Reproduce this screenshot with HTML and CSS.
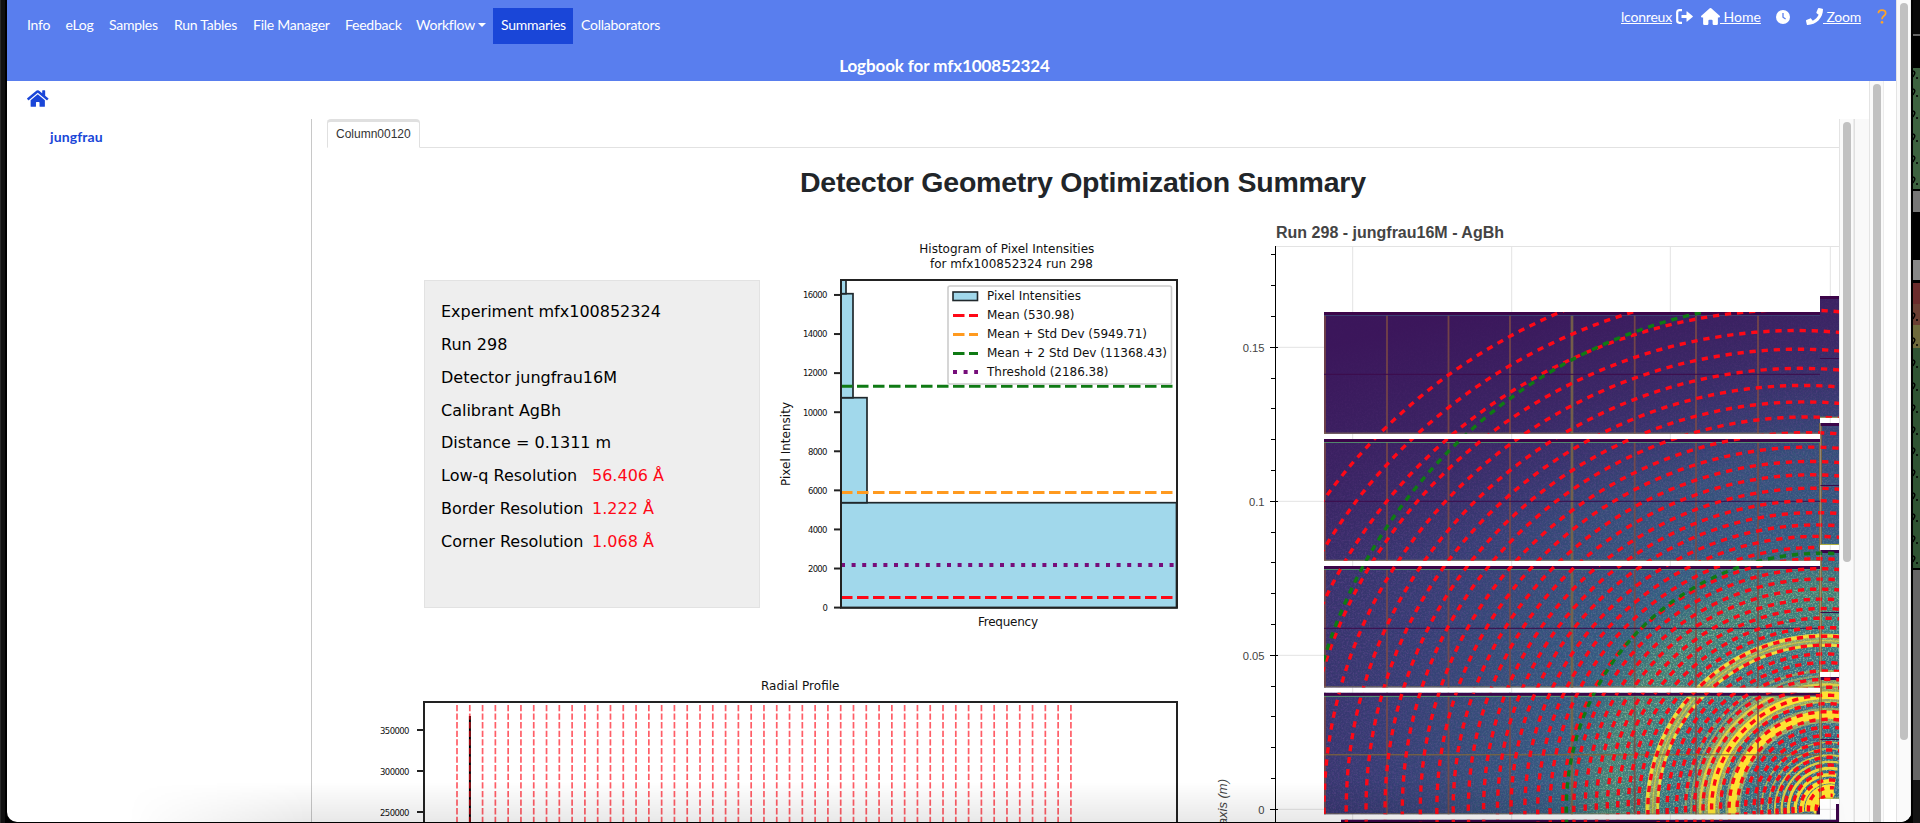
FILE: index.html
```html
<!DOCTYPE html>
<html lang="en">
<head>
<meta charset="utf-8">
<title>Logbook for mfx100852324</title>
<link rel="stylesheet" href="styles.css">
</head>
<body>
<div class="desktop">
  <div class="desktop-left"></div>
  <div class="window">
    <div class="page">
      <header class="header">
        <div class="bar">
          <nav class="nav">
            <a class="n1">Info</a><a class="n2">eLog</a><a class="n3">Samples</a><a class="n4">Run Tables</a><a class="n5">File Manager</a><a class="n6">Feedback</a><a class="n7">Workflow<i class="caret"></i></a><a class="n8 active">Summaries</a><a class="n9">Collaborators</a>
          </nav>
          <div class="tools">
            <u class="user">lconreux</u>
            <svg class="i-out" viewBox="0 0 17 15"><path d="M6 1.2H3.4Q1.2 1.2 1.2 3.4v8.200q0 2.200 2.200 2.200H6" fill="none" stroke="#fff" stroke-width="2.200"/><path d="M5.500 6h5V2.800q0-.8.7-.3l5.400 4.400q.6.6 0 1.200l-5.400 4.400q-.7.5-.7-.3V9h-5z" fill="#fff"/></svg>
            <svg class="i-home" viewBox="0 0 576 512"><path fill="#fff" d="M288 0q12 0 22 8L565 232q11 10 11 24 0 32-32 32h-32v184q0 40-40 40h-80q-40 0-40-40v-88q0-32-32-32h-64q-32 0-32 32v88q0 40-40 40h-80q-40 0-40-40V288H32Q0 288 0 256q0-14 10-24L266 8q10-8 22-8z"/></svg>
            <u class="home">&nbsp;Home</u>
            <svg class="i-clock" viewBox="0 0 14 14"><circle cx="7" cy="7" r="7" fill="#fff"/><path d="M7 3v4.200l2.600 1.800" fill="none" stroke="#597eee" stroke-width="1.300"/></svg>
            <svg class="i-phone" viewBox="0 0 512 512"><path fill="#fff" d="M493.400 24.600l-104-24c-11.300-2.600-22.900 3.300-27.500 13.900l-48 112c-4.200 9.800-1.400 21.300 6.900 28l60.600 49.600c-36 76.700-98.900 140.500-177.200 177.200l-49.600-60.600c-6.800-8.300-18.200-11.100-28-6.900l-112 48C3.900 366.500-2 378.100.6 389.400l24 104C27.100 504.200 36.700 512 48 512c256.100 0 464-207.500 464-464 0-11.200-7.700-20.900-18.600-23.400z"/></svg>
            <u class="zoom">&nbsp;Zoom</u>
            <svg class="i-help" viewBox="0 0 10 16"><path d="M1.200 4.600C1.200 2.400 2.800 1.200 5 1.200S8.900 2.500 8.900 4.500C8.900 7.300 5 7.300 5 10.800" fill="none" stroke="#ffa426" stroke-width="1.900"/><circle cx="5" cy="14.200" r="1.400" fill="#ffa426"/></svg>
          </div>
        </div>
        <h1>Logbook for mfx100852324</h1>
      </header>
      <div class="body">
        <div class="body-main">
          <div class="crumb"><svg class="i-house" viewBox="0 0 576 512"><path fill="#1a46d8" d="M280.370 148.260L96 300.110V464a16 16 0 0 0 16 16l112.060-.29a16 16 0 0 0 15.920-16V368a16 16 0 0 1 16-16h64a16 16 0 0 1 16 16v95.640a16 16 0 0 0 16 16.050L464 480a16 16 0 0 0 16-16V300L295.670 148.260a12.190 12.190 0 0 0-15.300 0zM571.600 251.470L488 182.560V44.050a12 12 0 0 0-12-12h-56a12 12 0 0 0-12 12v72.610L318.470 43a48 48 0 0 0-61 0L4.340 251.470a12 12 0 0 0-1.600 16.900l25.500 31A12 12 0 0 0 45.150 301l235.220-193.740a12.190 12.190 0 0 1 15.300 0L530.900 301a12 12 0 0 0 16.900-1.600l25.500-31a12 12 0 0 0-1.700-16.930z"/></svg></div>
          <div class="columns">
            <aside class="side"><a>jungfrau</a></aside>
            <main class="report">
              <div class="tabs"><div class="tab">Column00120</div></div>
              <h2>Detector Geometry Optimization Summary</h2>
              <div class="plots">
                <div class="left">
                  <div class="row">
                    <div class="info">
                      <p>Experiment mfx100852324</p><p>Run 298</p><p>Detector jungfrau16M</p><p>Calibrant AgBh</p><p>Distance = 0.1311 m</p>
                      <p><span>Low-q Resolution</span><b>56.406 Å</b></p><p><span>Border Resolution</span><b>1.222 Å</b></p><p><span>Corner Resolution</span><b>1.068 Å</b></p>
                    </div>
                    <svg class="hist" viewBox="765 235 425 405">
                      <g class="dj" font-size="12">
                        <text x="919.300" y="253" textLength="175">Histogram of Pixel Intensities</text>
                        <text x="930" y="268" textLength="163">for mfx100852324 run 298</text>
                        <text x="978" y="626" textLength="60">Frequency</text>
                        <text transform="translate(790 486) rotate(-90)" textLength="84">Pixel Intensity</text>
                      </g>
                      <g id="hist-ticks" class="dj" font-size="8.500"></g>
                      <g fill="#a1d8eb" stroke="#20282c" stroke-width="1.700">
                        <rect x="841" y="502.700" width="335.500" height="105"/>
                        <rect x="841" y="397.700" width="26" height="105"/>
                        <rect x="841" y="293.700" width="12" height="104"/>
                        <rect x="841" y="280" width="5" height="13.700"/>
                      </g>
                      <g stroke-width="3" stroke-dasharray="11.500 4.500">
                        <path d="M841 386.300H1176" stroke="#0f7a14"/><path d="M841 492.500H1176" stroke="#ff9a1f"/><path d="M841 597.500H1176" stroke="#ff0816"/>
                      </g>
                      <path d="M841 565H1176" stroke="#760d7a" stroke-width="3.800" stroke-dasharray="4 6.600"/>
                      <rect x="841" y="280" width="336" height="327.700" fill="none" stroke="#222" stroke-width="2"/>
                      <rect x="948" y="286" width="223.500" height="98" rx="2" fill="#fff" stroke="#ccc" stroke-width="1.600"/>
                      <rect x="953" y="292" width="24.500" height="8.500" fill="#a1d8eb" stroke="#20282c" stroke-width="1.600"/>
                      <g stroke-width="3" stroke-dasharray="11.500 4.500"><path d="M953 315.500h25" stroke="#ff0816"/><path d="M953 334.500h25" stroke="#ff9a1f"/><path d="M953 353.500h25" stroke="#0f7a14"/></g>
                      <path d="M953 372h25" stroke="#760d7a" stroke-width="3.800" stroke-dasharray="4 6.600"/>
                      <g class="dj" font-size="12">
                        <text x="987" y="300" textLength="94">Pixel Intensities</text><text x="987" y="319" textLength="87.500">Mean (530.98)</text><text x="987" y="338" textLength="160">Mean + Std Dev (5949.71)</text><text x="987" y="357" textLength="180">Mean + 2 Std Dev (11368.43)</text><text x="987" y="376" textLength="121.500">Threshold (2186.38)</text>
                      </g>
                    </svg>
                  </div>
                  <svg class="radial" viewBox="370 670 820 153">
                    <text class="dj" font-size="12" x="761" y="690" textLength="78.500">Radial Profile</text>
                    <g class="dj" font-size="8.500"><text x="380" y="733.500" textLength="29.500">350000</text><text x="380" y="774.500" textLength="29.500">300000</text><text x="380" y="815.500" textLength="29.500">250000</text></g>
                    <path d="M417 730h7M417 771h7M417 812h7" stroke="#222" stroke-width="2"/>
                    <path d="M469.900 716v107" stroke="#000" stroke-width="2"/>
                    <g id="radial-lines" stroke="#ff0816" stroke-opacity=".65" stroke-width="1.700" stroke-dasharray="6.300 2.300"></g>
                    <path d="M424 830V702H1177V830" fill="none" stroke="#222" stroke-width="2"/>
                  </svg>
                </div>
                <svg class="det" viewBox="1210 220 629 603">
                  <defs>
                    <radialGradient id="heat" gradientUnits="userSpaceOnUse" cx="1824" cy="809" r="640">
                      <stop offset="0" stop-color="#2f6a82"/><stop offset=".2" stop-color="#347681"/><stop offset=".28" stop-color="#35807c"/><stop offset=".34" stop-color="#408572"/><stop offset=".39" stop-color="#31697f"/><stop offset=".44" stop-color="#315980"/><stop offset=".56" stop-color="#344d79"/><stop offset=".68" stop-color="#363e75"/><stop offset=".8" stop-color="#37356f"/><stop offset="1" stop-color="#3a2869"/>
                    </radialGradient>
                    <linearGradient id="dusk" gradientUnits="userSpaceOnUse" x1="1500" y1="300" x2="1560" y2="520"><stop offset="0" stop-color="#3b155a" stop-opacity=".95"/><stop offset=".5" stop-color="#3b1a5c" stop-opacity=".6"/><stop offset="1" stop-color="#3b1a5c" stop-opacity="0"/></linearGradient>
                    <filter id="grain" x="0" y="0" width="100%" height="100%"><feTurbulence type="fractalNoise" baseFrequency=".6" numOctaves="2" seed="4"/><feColorMatrix values="0 0 0 0 .5  0 0 0 0 .78  0 0 0 0 .45  1.900 0 0 0 -.85"/></filter>
                    <filter id="shade" x="0" y="0" width="100%" height="100%"><feTurbulence type="fractalNoise" baseFrequency=".55" numOctaves="2" seed="11"/><feColorMatrix values="0 0 0 0 .2  0 0 0 0 .08  0 0 0 0 .36  0 1.800 0 0 -.75"/></filter>
                    <radialGradient id="fade" gradientUnits="userSpaceOnUse" cx="1824" cy="809" r="560"><stop offset="0" stop-color="#fff"/><stop offset=".38" stop-color="#ddd"/><stop offset=".46" stop-color="#555"/><stop offset=".7" stop-color="#1c1c1c"/><stop offset="1" stop-color="#111"/></radialGradient>
                    <mask id="fade-mask"><rect x="1300" y="280" width="560" height="560" fill="url(#fade)"/></mask>
                    <clipPath id="modules"><path d="M1324 312h496v121.700h-496zM1324 439h496v121.700h-496zM1324 566h496v121.500h-496zM1324 692.700h496v121.600h-496zM1341 819.700h498v10h-498zM1820 296h19v121.700h-19zM1820.500 423h19v122h-19zM1820.500 550h19v121.700h-19zM1820.500 677h19v121.700h-19zM1836 804h3v20h-3z"/></clipPath>
                  </defs>
                  <path d="M1276 246.500h563M1352.700 246v577M1511.700 246v577M1670.300 246v577M1830.300 246v577M1276 347.300h563M1276 501.300h563M1276 655.300h563M1276 809.300h563" stroke="#e3e3e3"/>
                  <g clip-path="url(#modules)">
                    <rect x="1320" y="290" width="520" height="540" fill="url(#heat)"/>
                    <g id="powder" fill="none" stroke="#fde333"></g>
                    <g mask="url(#fade-mask)"><rect x="1320" y="290" width="520" height="540" filter="url(#grain)"/></g>
                    <rect x="1320" y="290" width="520" height="540" filter="url(#shade)" opacity=".45"/>
                    <rect x="1320" y="290" width="520" height="300" fill="url(#dusk)"/>
                    <g id="bright" fill="none" stroke="#fde333"></g>
                    <path d="M1387 315v500M1448.500 315v500M1510 315v500M1572 315v500M1634.700 315v500M1696 315v500M1758 315v500M1325 315v500" stroke="#7d4a45" stroke-width="1.800" opacity=".85"/>
                    <path d="M1572 312v502" stroke="#7a7a48" stroke-width="3" opacity=".5"/>
                    <path d="M1820.500 423v391" stroke="#8a6a30" stroke-width="2.500"/>
                    <path d="M1324 374.300h496M1324 501.300h496M1324 628.300h496M1820 358.500h19M1820 485.500h19M1820 612.500h19M1820 739.500h19" stroke="#3c0a4a"/>
                    <path d="M1324 754.800h496" stroke="#8a6a30"/>
                    <path d="M1324 433.200h496M1324 560.300h496M1324 687h496M1324 814h496" stroke="#8a7a50"/>
                    <path d="M1324 315.300h496" stroke="#3c4a78"/>
                    <path d="M1324 442.300h496M1324 569.300h496M1324 696.300h496" stroke="#58a070"/>
                    <path d="M1820 417.300h19M1820 544.500h19M1820 671.300h19M1820 798.200h19" stroke="#b0b040"/>
                    <path d="M1324 313.500h496M1324 440.500h496M1324 567.500h496M1324 694.200h496M1341 821h498M1820 297.500h19M1820.500 424.500h19M1820.500 551.500h19M1820.500 678.500h19" stroke="#3c0549" stroke-width="3"/>
                    <path d="M1820 805l-3.500 5v5h3.500zM1836 804h3v16h-3z" fill="#3c0549"/>
                    <g id="rings" fill="none" stroke="#ff0816" stroke-width="3.400" stroke-dasharray="6.300 5.800"></g>
                    <g id="limits" fill="none" stroke="#0f7a14" stroke-width="3.400" stroke-dasharray="6.300 5.800"></g>
                  </g>
                  <path d="M1275.500 246v577" stroke="#000"/>
                  <g id="det-ticks" stroke="#000"></g>
                  <g class="hv" font-size="11.200" text-anchor="end" fill="#444"><text x="1264.500" y="352">0.15</text><text x="1264.500" y="506">0.1</text><text x="1264.500" y="660">0.05</text><text x="1264.500" y="813.500">0</text></g>
                  <text class="hv" font-size="13" font-style="italic" fill="#444" text-anchor="end" transform="translate(1227 779) rotate(-90)">axis (m)</text>
                  <text class="hv" font-size="16" font-weight="700" fill="#444" x="1276" y="237.500" textLength="228">Run 298 - jungfrau16M - AgBh</text>
                </svg>
              </div>
            </main>
            <div class="scroll s-report"><i></i></div>
            <div class="spacer"></div>
          </div>
        </div>
        <div class="scroll s-body"><i></i></div>
      </div>
    </div>
    <div class="scroll s-page"><i></i></div>
    <div class="shadow"></div>
  </div>
  <div class="desktop-right">
    <svg viewBox="0 0 7 823"><g id="cells" fill="none" stroke="#000" stroke-width="1.400"></g></svg>
  </div>
</div>
<script src="charts.js"></script>
</body>
</html>
```
FILE: styles.css
```css
* { box-sizing: border-box; }
body { margin: 0; overflow: hidden; background: #000; }
svg { display: block; flex: none; }
.desktop { display: flex; width: 1920px; height: 823px; background: #000; }
.desktop-left { width: 7px; background: linear-gradient(90deg, #2a2a2a 1px, #111 1px, #111 5px, #000 5px); }
.window { position: relative; width: 1904px; height: 822px; display: flex; background: #fff; border-radius: 0 0 10px 10px; overflow: hidden; font-family: Lato, sans-serif; }
.page { width: 1889px; }
.header { height: 81px; background: #597eee; color: #fff; }
.bar { display: flex; justify-content: space-between; padding: 8px 9px 0 12px; height: 56px; }
.nav { display: flex; font-size: 14px; line-height: 34px; height: 36px; }
.nav a { padding-left: 8px; white-space: nowrap; letter-spacing: -.25px; }
.n1 { width: 38.500px; } .n2 { width: 43.500px; } .n3 { width: 65px; } .n4 { width: 79px; } .n5 { width: 92px; } .n6 { width: 71px; } .n7 { width: 85px; } .n8 { width: 80px; } .n9 { width: 94px; }
.active { background: #1a46d8; }
.caret { display: inline-block; margin-left: 3px; vertical-align: 3px; border: 4px solid transparent; border-top-color: #fff; border-bottom: 0; }
.tools { display: flex; align-items: flex-start; font-size: 14px; line-height: 18px; }
.user { width: 52px; letter-spacing: -.2px; margin-right: 3px; }
.i-out { width: 17px; height: 15px; margin: 1px 8px 0 0; }
.i-home { width: 19px; height: 17px; }
.home { width: 56px; }
.i-clock { width: 14px; height: 14px; margin: 2px 16px 0 0; }
.i-phone { width: 17px; height: 17px; }
.zoom { width: 54px; letter-spacing: -.2px; }
.i-help { width: 10px; height: 15px; margin-top: 1px; }
h1 { margin: 0; text-align: center; font-size: 17px; line-height: 19px; padding-right: 14px; letter-spacing: -.1px; }
.body { display: flex; height: 741px; width: 1877px; }
.body-main { width: 1862px; }
.crumb { height: 38px; padding: 8px 0 0 20px; }
.i-house { width: 21.500px; height: 19px; }
.columns { display: flex; height: 703px; }
.side { width: 305px; border-right: 1px solid #c8c8c8; padding: 8px 0 0 43px; color: #1a46d8; font-weight: 700; font-size: 14px; line-height: 20px; letter-spacing: .1px; }
.report { width: 1527px; padding-left: 15px; overflow: hidden; font-family: "Liberation Sans", Arial, sans-serif; }
.tabs { height: 29px; border-bottom: 1px solid #e2e2e2; display: flex; }
.tab { width: 93px; height: 29px; border: 1px solid #e0e0e0; border-top-width: 3px; border-bottom-color: #fff; border-radius: 4px 4px 0 0; padding-left: 8px; font-size: 12px; line-height: 24px; color: #333; }
h2 { margin: 0; padding-left: 473px; height: 72px; line-height: 68px; font-size: 28.500px; letter-spacing: -.24px; color: #212529; white-space: nowrap; }
.plots { display: flex; gap: 20px; }
.left { width: 863px; padding-top: 15px; }
.row { display: flex; gap: 5px; padding-left: 97px; }
.info { width: 336px; height: 328px; margin-top: 45px; border: 1px solid #e2e2e2; background: #eee; padding: 15px 0 0 16px; font-family: "DejaVu Sans", sans-serif; font-size: 16px; color: #000; }
.info p { margin: 0; line-height: 32.850px; display: flex; white-space: nowrap; }
.info span { width: 151px; }
.info b { color: #ff0816; font-weight: 400; }
.hist { width: 425px; height: 405px; }
.radial { width: 820px; height: 153px; margin: 30px 0 0 43px; }
.det { width: 629px; height: 603px; }
.dj { font-family: "DejaVu Sans", sans-serif; fill: #111; }
.hv { font-family: "Liberation Sans", Arial, sans-serif; }
.scroll { width: 15px; background: #fafafa; border-left: 1px solid #e4e4e4; border-right: 1px solid #ececec; padding: 3px 0 0 3px; }
.scroll i { display: block; width: 8px; border-radius: 4px; background: #c1c1c1; }
.s-report i { height: 440px; } .s-body i { height: 760px; } .s-page i { height: 737px; }
.spacer { width: 15px; background: #f9f9f9; border-left: 1px solid #e0e0e0; }
.shadow { position: absolute; left: 120px; right: 60px; bottom: 0; height: 40px; background: linear-gradient(0deg, rgba(0,0,0,.09), rgba(0,0,0,0)); -webkit-mask-image: linear-gradient(90deg, transparent, #000 180px, #000 1500px, transparent); mask-image: linear-gradient(90deg, transparent, #000 180px, #000 1500px, transparent); }
.desktop-right { width: 7px; margin-left: 2px; background: linear-gradient(#080808 34px, #666 34px, #666 36px, #000 36px, #000 68px, #3d6340 68px, #3d6340 189px, #000 189px, #000 191px, #777 191px, #777 212px, #000 212px, #000 260px, #888 260px, #888 280px, #000 280px, #000 283px, #6b2b2b 283px, #6b2b2b 304px, #6b3f33 304px, #6b3f33 325px, #6f6b3c 325px, #6f6b3c 348px, #2f5433 348px, #2f5433 568px, #000 568px, #000 570px, #666 570px, #666 780px, #141414 780px); }
.desktop-right svg { width: 7px; height: 823px; }
```
FILE: charts.js
```js
const NS = 'http://www.w3.org/2000/svg';
const add = (id, tag, attrs, text) => {
  const el = document.createElementNS(NS, tag);
  for (const k in attrs) el.setAttribute(k, attrs[k]);
  if (text) el.textContent = text;
  document.getElementById(id).appendChild(el);
};

// Histogram intensity axis
for (let v = 0; v <= 16000; v += 2000) {
  const y = 607.6 - v * 0.01954, w = String(v).length * 4.9;
  add('hist-ticks', 'text', { x: 827.5 - w, y: y + 3.3, textLength: w }, String(v));
  add('hist-ticks', 'path', { d: `M834 ${y}h7`, stroke: '#222', 'stroke-width': 2 });
}

// Expected peak positions on the radial profile
for (let i = 0; i < 49; i++) add('radial-lines', 'path', { d: `M${457 + i * 12.79} 823V702` });

// Detector axis, one tick per 0.01 m
for (let k = 0; k < 19; k++) {
  const y = Math.floor(809.3 - k * 30.8) + 0.5;
  add('det-ticks', 'path', { d: k % 5 ? `M1271 ${y}h4` : `M1270 ${y}h8` });
}

// A tilted detector stretches each ring toward the left of the beam centre
const arc = (t, a, end = 100) => {
  let d = '';
  for (let deg = -6; deg <= end; deg += 1) {
    const p = deg * Math.PI / 180, s = Math.sin(p);
    const f = Math.cos(p) - 0.17 * s * s * Math.sin(2 * p);
    const r = t + (a === undefined ? 41.3 * Math.pow(t / 423, 1.65) * f : a * Math.cos(p));
    d += `${d ? 'L' : 'M'}${(1830.3 - r * Math.cos(p)).toFixed(1)} ${(809.3 - r * s).toFixed(1)}`;
  }
  return d;
};
const radii = [14, 21.6, 29.3, 36.6, 44.3, 52, 59.3, 66.6, 74, 82, 90, 97.6, 105.6, 114, 122, 130, 138.3, 146.6, 155.3, 164, 173, 181.6, 191, 200.6, 210, 220, 230, 240.3, 250.3, 261.6, 272.6, 284, 296.3, 308.3, 320.6, 334, 347.3, 361.6, 376, 391.6, 406.6, 423, 440, 459, 477.6, 498.3, 519.5, 543];
radii.forEach(r => add('rings', 'path', { d: arc(r) }));
add('limits', 'path', { d: arc(508, 21, 76) });
add('limits', 'path', { d: arc(256, 8) });

// Measured powder rings: radius, width, opacity
[[169, 13, .45], [173.5, 4, .75], [164, 3, .75], [138, 2.5, .4], [126, 9, .4], [124, 2, .6], [133, 2, .4], [114, 15, .5], [94, 15, .5]]
  .forEach(([r, w, o]) => add('powder', 'path', { d: arc(r), 'stroke-width': w, opacity: o }));
[[173.5, 2.5, .8], [164, 2, .8], [168.5, 1.2, .5], [125, 2, .6], [114, 7.5, 1], [94.5, 8, 1], [107, 1.2, .6], [67, 1.4, .6], [60.5, 1.6, .6], [54, 2, .75], [47.5, 2.2, .8], [41, 3, .9], [34.5, 3.5, .95], [28, 4.5, 1], [20, 10, 1], [8, 17, 1]]
  .forEach(([r, w, o]) => add('bright', 'path', { d: arc(r), 'stroke-width': w, opacity: o }));

// Edge of the table window behind the browser
[75, 93, 115, 138, 160, 181, 317, 342, 364, 387, 409, 431, 452, 474, 497, 518, 540, 560]
  .forEach(y => add('cells', 'path', { d: `M0 ${y - 4}q3 1 1 4l-1 2M3 ${y + 3}h2` }));
```
